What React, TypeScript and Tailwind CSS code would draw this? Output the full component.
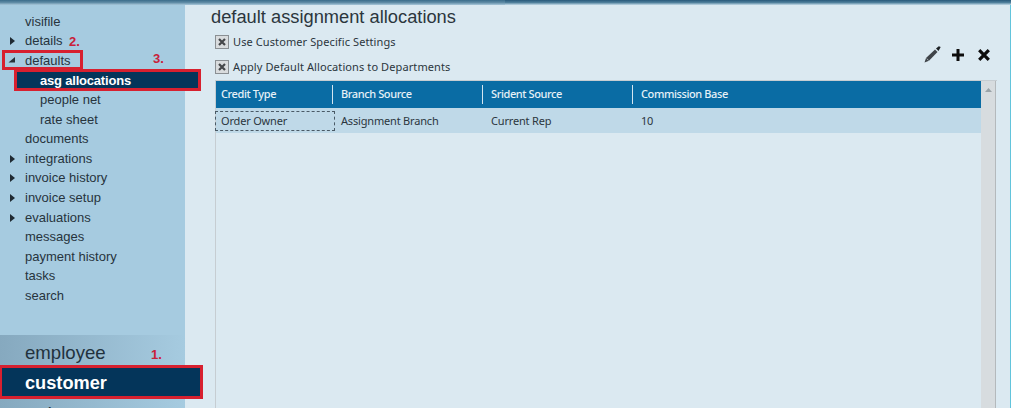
import React from "react";

const ARIAL = "font-['Liberation_Sans',Arial,sans-serif]";
const UI = "font-['Noto_Sans',Tahoma,sans-serif]";
const RED = "border-[#d7202f]";

function Arrow({ open }: { open?: boolean }) {
  return (
    <svg width="8" height="10" viewBox="0 0 8 10" className="absolute left-[8px] top-[5px]">
      {open ? <path d="M0.5 6.5 L7 6.5 L7 1 Z" fill="#26323a" /> : <path d="M2 1 L7 5 L2 9 Z" fill="#1f2a32" />}
    </svg>
  );
}

function NavItem({ label, arrow, open, sub }: { label: string; arrow?: boolean; open?: boolean; sub?: boolean }) {
  return (
    <div className={`relative h-[19.6px] leading-[19.6px] text-[13px] text-[#27343d] ${sub ? "pl-[40px]" : "pl-[25px]"}`}>
      {arrow && <Arrow open={open} />}
      {label}
    </div>
  );
}

function Check({ label }: { label: string }) {
  return (
    <div className="flex items-center h-[16px] gap-[4px]">
      <div className="w-[14px] h-[14px] border border-[#8a8f93] bg-[#d9dcde] flex items-center justify-center">
        <svg width="10" height="10" viewBox="0 0 10 10">
          <path d="M2 2 L8 8 M8 2 L2 8" stroke="#45474a" strokeWidth="2.2" />
        </svg>
      </div>
      <span className="text-[11px] text-[#2b363d] tracking-[0.1px]">{label}</span>
    </div>
  );
}

function Head({ label, w, first }: { label: string; w: string; first?: boolean }) {
  return (
    <div className={`${w} h-full flex items-center`}>
      {!first && <div className="w-px h-[19px] bg-[#d5e6f0] mr-[8px]" />}
      <span className={`${first ? "pl-[5px]" : ""} text-[11px] tracking-[-0.4px] font-medium text-[#e6f1f7]`}>{label}</span>
    </div>
  );
}

export default function App() {
  return (
    <div className={`relative w-[1011px] h-[408px] overflow-hidden bg-[#dbe9f1] ${ARIAL}`}>
      <div className="flex h-[5px]">
        <div className="w-[505px] bg-gradient-to-b from-[#3a6c8a] via-[#5f8ba5] to-[#a9c8da]" />
        <div className="flex-1 bg-gradient-to-b from-[#28597a] via-[#4f7f9b] to-[#c3dbe8]" />
      </div>
      <div className="flex h-[403px]">
        <aside className="relative w-[185px] h-full shrink-0 bg-[#a6cbe0] flex flex-col">
          <div className="pt-[6.7px] h-[330px] shrink-0">
            <NavItem label="visifile" />
            <NavItem label="details" arrow />
            <NavItem label="defaults" arrow open />
            <div className="relative h-[19.6px]">
              <div className={`absolute left-[14px] -top-[1px] w-[187px] h-[22px] leading-[17px] pl-[23px] text-[13px] tracking-[-0.2px] font-bold text-white bg-[#04355a] border-[3px] ${RED}`}>
                asg allocations
              </div>
            </div>
            <NavItem label="people net" sub />
            <NavItem label="rate sheet" sub />
            <NavItem label="documents" />
            <NavItem label="integrations" arrow />
            <NavItem label="invoice history" arrow />
            <NavItem label="invoice setup" arrow />
            <NavItem label="evaluations" arrow />
            <NavItem label="messages" />
            <NavItem label="payment history" />
            <NavItem label="tasks" />
            <NavItem label="search" />
          </div>
          <div className="flex-1 bg-gradient-to-r from-[#86a9bf] to-[#a6cbe0]">
            <div className="h-[30px] pl-[25px] pt-[6px] text-[18.6px] leading-[24px] text-[#22323d]">employee</div>
            <div className="relative h-[34px]">
              <div className={`absolute left-0 top-0 w-[203px] h-[34px] pl-[23px] pt-[3px] flex items-center text-[18.2px] font-bold text-white bg-[#04355a] border-[3px] border-l-[2px] ${RED}`}>
                customer
              </div>
            </div>
            <div className="pl-[25px] pt-[3px] text-[18.6px] leading-[24px] text-[#22323d]">order</div>
          </div>
        </aside>
        <main className="relative flex-1 min-w-0 pl-[26px] border-r border-[#62c4dc]">
          <h1 className="text-[18.3px] leading-[20px] text-[#2b363d] mt-[2px] font-normal">
            default assignment allocations
          </h1>
          <div className={`${UI} ml-[4px] mt-[7px] flex flex-col gap-[9px]`}>
            <Check label="Use Customer Specific Settings" />
            <Check label="Apply Default Allocations to Departments" />
          </div>
          <div className={`${UI} relative mt-[5px] ml-[4px] w-[782px] h-[400px] border-l border-t border-[#c6cdd2] flex`}>
            <div className="w-[765px] shrink-0">
              <div className="h-[27px] bg-[#0a6ca4] flex items-center">
                <Head label="Credit Type" w="w-[116px]" first />
                <Head label="Branch Source" w="w-[150px]" />
                <Head label="Srident Source" w="w-[150px]" />
                <Head label="Commission Base" w="w-[200px]" />
              </div>
              <div className="h-[25px] bg-[#bfd9e8] flex items-center text-[11px] tracking-[-0.18px] text-[#2b363d]">
                <div className="w-[120px] h-[20px] flex items-center pl-[5px] pt-[1px] border border-dashed border-[#4a5a66] -ml-px">Order Owner</div>
                <div className="w-[150px] pl-[6px] pt-[1px]">Assignment Branch</div>
                <div className="w-[150px] pl-[6px] pt-[1px]">Current Rep</div>
                <div className="pl-[6px] pt-[1px]">10</div>
              </div>
            </div>
            <div className="w-[15px] shrink-0 bg-[#d7dcdf] border-r border-[#b4b9bc] flex justify-center pt-[7px]">
              <svg width="7" height="4" viewBox="0 0 7 4"><path d="M0 4 L3.5 0 L7 4 Z" fill="#9aa3a8" /></svg>
            </div>
          </div>
          {/* toolbar icons */}
          <div className="absolute left-[739px] top-[41px] flex items-start">
            <svg width="17" height="17" viewBox="0 0 17 17" className="mr-[11px]">
              <path d="M0.5 16.5 L2 12 L11 3.5 L13.5 6 L5 14.8 Z" fill="#3f4449" />
              <path d="M12 2.5 L14.8 0.3 L16.7 1 L14.5 5 Z" fill="#1d2124" />
              <path d="M2.6 12.6 L4.6 14.4" stroke="#c8d5dc" strokeWidth="0.7" />
            </svg>
            <svg width="12" height="12" viewBox="0 0 12 12" className="mt-[3px] mr-[14px]"><path d="M6 0 V12 M0 6 H12" stroke="#0d0d0d" strokeWidth="3" /></svg>
            <svg width="12" height="12" viewBox="0 0 12 12" className="mt-[3px]"><path d="M1.2 1.2 L10.8 10.8 M10.8 1.2 L1.2 10.8" stroke="#0d0d0d" strokeWidth="3.2" /></svg>
          </div>
        </main>
      </div>
      {/* annotations */}
      <div className={`absolute left-[2px] top-[50px] w-[81px] h-[20px] border-[3px] ${RED}`} />
      <span className="absolute left-[69px] top-[32px] text-[13px] font-bold text-[#c9203a]">2.</span>
      <span className="absolute left-[153px] top-[49px] text-[13px] font-bold text-[#c9203a]">3.</span>
      <span className="absolute left-[151px] top-[345px] text-[13px] font-bold text-[#c9203a]">1.</span>
    </div>
  );
}
